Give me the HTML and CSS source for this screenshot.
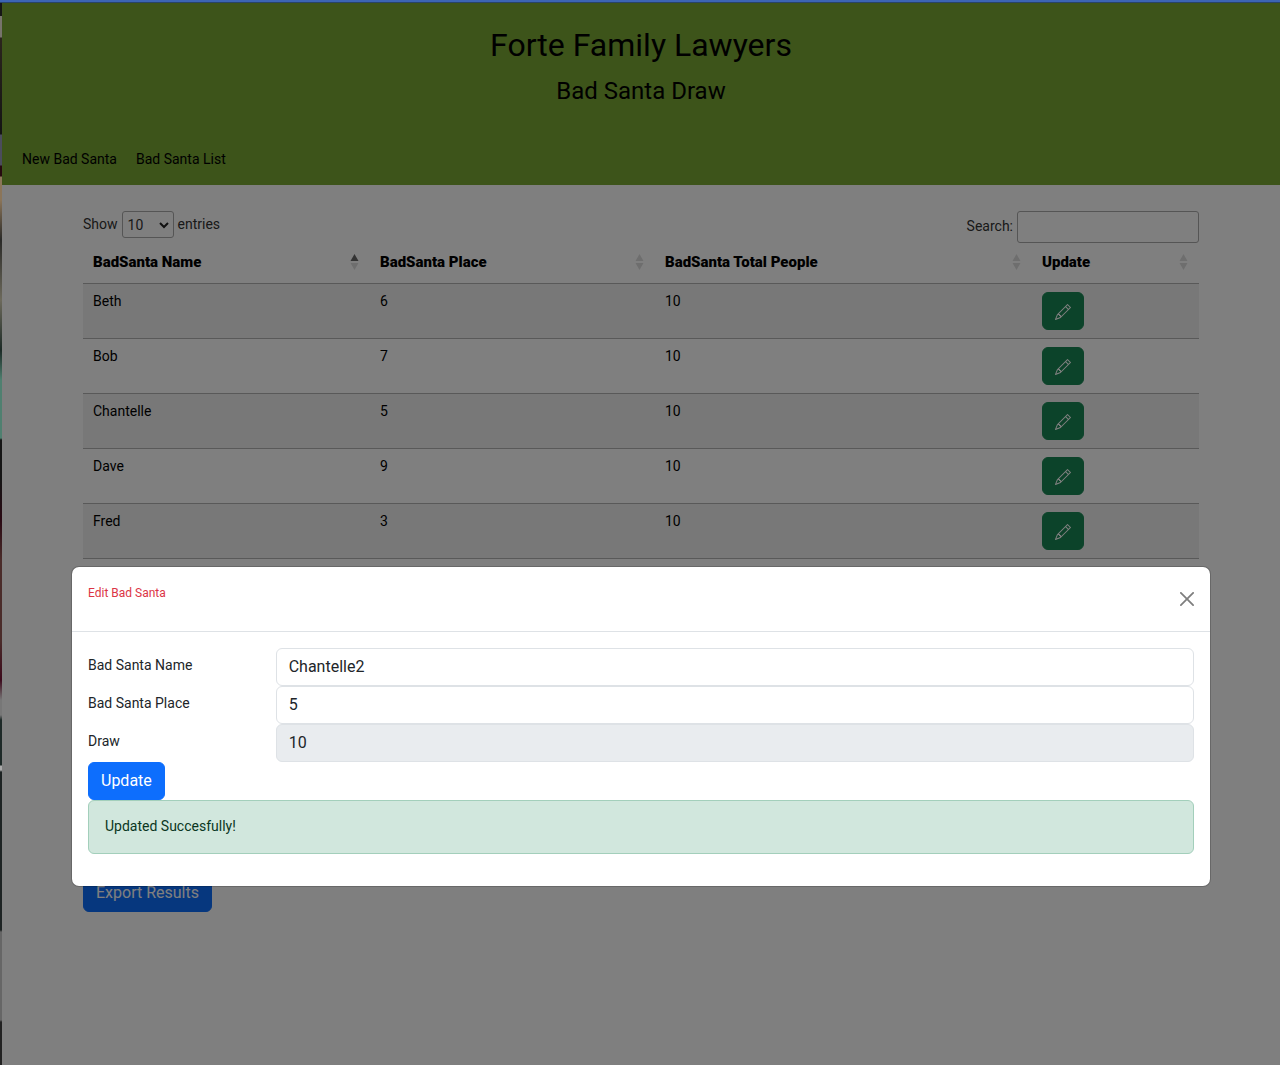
FILE: index.html
```html
<!DOCTYPE html>
<html lang="en">
<head>
<meta charset="utf-8">
<meta name="viewport" content="width=device-width, initial-scale=1">
<title>Bad Santa Draw</title>
<link rel="stylesheet" href="styles.css">
</head>
<body>
<svg class="sprite" aria-hidden="true">
  <symbol id="pencil" viewBox="0 0 16 16"><path d="M12.146.146a.5.5 0 0 1 .708 0l3 3a.5.5 0 0 1 0 .708l-10 10a.5.5 0 0 1-.168.11l-5 2a.5.5 0 0 1-.65-.65l2-5a.5.5 0 0 1 .11-.168zM11.207 2.5 13.5 4.793 14.793 3.5 12.5 1.207zm1.586 3L10.5 3.207 4 9.707V10h.5a.5.5 0 0 1 .5.5v.5h.5a.5.5 0 0 1 .5.5v.5h.293zm-9.761 5.175-.106.106-1.528 3.821 3.821-1.528.106-.106A.5.5 0 0 1 5 12.500V12h-.5a.5.5 0 0 1-.5-.5V11h-.5a.5.5 0 0 1-.468-.325z"/></symbol>
  <symbol id="sort" viewBox="0 0 9 18"><path class="up" d="M4.500 1 8.500 8H.5z"/><path d="M.5 10h8l-4 7z"/></symbol>
</svg>
<div class="page">
  <header class="banner">
    <h1>Forte Family Lawyers</h1>
    <h2>Bad Santa Draw</h2>
    <nav class="nav"><a href="#new">New Bad Santa</a><a href="#list">Bad Santa List</a></nav>
  </header>
  <main class="container">
    <div class="controls">
      <label class="length">Show <span class="select-wrap"><select><option>10</option></select><svg class="chevron" viewBox="0 0 10 10"><path d="m1 3 4 4 4-4"/></svg></span> entries</label>
      <label class="search">Search: <input type="search"></label>
    </div>
    <table class="draw">
      <colgroup><col class="c-name"><col class="c-place"><col class="c-total"><col class="c-update"></colgroup>
      <thead><tr>
        <th><div class="head">BadSanta Name<svg class="sort asc"><use href="#sort"/></svg></div></th>
        <th><div class="head">BadSanta Place<svg class="sort"><use href="#sort"/></svg></div></th>
        <th><div class="head">BadSanta Total People<svg class="sort"><use href="#sort"/></svg></div></th>
        <th><div class="head">Update<svg class="sort"><use href="#sort"/></svg></div></th>
      </tr></thead>
      <tbody>
        <tr><td>Beth</td><td>6</td><td>10</td><td class="action"><button class="btn edit" aria-label="Edit Beth"><svg><use href="#pencil"/></svg></button></td></tr>
        <tr><td>Bob</td><td>7</td><td>10</td><td class="action"><button class="btn edit" aria-label="Edit Bob"><svg><use href="#pencil"/></svg></button></td></tr>
        <tr><td>Chantelle</td><td>5</td><td>10</td><td class="action"><button class="btn edit" aria-label="Edit Chantelle"><svg><use href="#pencil"/></svg></button></td></tr>
        <tr><td>Dave</td><td>9</td><td>10</td><td class="action"><button class="btn edit" aria-label="Edit Dave"><svg><use href="#pencil"/></svg></button></td></tr>
        <tr><td>Fred</td><td>3</td><td>10</td><td class="action"><button class="btn edit" aria-label="Edit Fred"><svg><use href="#pencil"/></svg></button></td></tr>
      </tbody>
    </table>
    <button class="btn primary">Export Results</button>
  </main>
  <div class="backdrop">
    <section class="modal" role="dialog" aria-labelledby="modal-title">
      <div class="modal-header">
        <h3 id="modal-title">Edit Bad Santa</h3>
        <button class="close" aria-label="Close"><svg viewBox="0 0 16 16"><path d="M.293.293a1 1 0 0 1 1.414 0L8 6.586 14.293.293a1 1 0 1 1 1.414 1.414L9.414 8l6.293 6.293a1 1 0 0 1-1.414 1.414L8 9.414l-6.293 6.293a1 1 0 0 1-1.414-1.414L6.586 8 .293 1.707a1 1 0 0 1 0-1.414z"/></svg></button>
      </div>
      <form class="modal-body">
        <div class="field"><label for="name">Bad Santa Name</label><input id="name" value="Chantelle2"></div>
        <div class="field"><label for="place">Bad Santa Place</label><input id="place" value="5"></div>
        <div class="field"><label for="draw">Draw</label><input id="draw" value="10" disabled></div>
        <button class="btn primary" type="button">Update</button>
        <div class="alert" role="alert">Updated Succesfully!</div>
      </form>
    </section>
  </div>
</div>
</body>
</html>
```
FILE: styles.css
```css
* { box-sizing: border-box; }
body {
  margin: 0;
  padding: 3px 0 0 2px;
  font: 14px/20px Roboto, "Liberation Sans", sans-serif;
  color: #212529;
  background:
    linear-gradient(#3c65b5 0 2px, #294468 2px 3px, transparent 3px),
    linear-gradient(#161616 0 16px, #77736c 16px 37px, #2b251d 38px, #141414 134px, #4b4c5c 135px 165px, #260a10 166px 176px, #8b7559 177px 200px, #2a2a28 240px, #6d6a5c 300px, #1c2a26 350px, #4f8070 380px 438px, #151515 440px 480px, #2a0a14 520px, #4a2c2a 560px 640px, #3c0a1c 680px, #777 700px 715px, #1e2a28 720px 765px, #aaa 766px 770px, #1d2323 772px 930px, #666 932px 1020px, #222 1022px);
}
.sprite { position: absolute; width: 0; height: 0; }
.page { position: relative; min-height: calc(100vh - 3px); background: #fff; }
button, input, select { font-family: inherit; color: inherit; }

.banner { padding: 22px 12px 8px; background: #7aa834; color: #000; text-align: center; }
h1, h2, h3 { margin: 0; font-weight: 400; }
h1 { font-size: 32px; line-height: 40px; }
h2 { margin-top: 8px; font-size: 24px; line-height: 36px; }
.nav { display: flex; gap: 3px; margin-top: 32px; text-align: left; }
.nav a { padding: 8px; color: #000; text-decoration: none; }

.container { max-width: 1140px; margin: 0 auto; padding: 26px 12px 0; }
.controls { display: flex; justify-content: space-between; align-items: flex-start; height: 32px; color: #333; }
.length, .search { display: flex; align-items: flex-start; gap: 4px; }
.length { line-height: 26px; }
.search { line-height: 30px; }
.select-wrap { position: relative; display: flex; }
select {
  width: 52px; height: 27px; padding: 0 5px;
  border: 1px solid #aaa; border-radius: 3px;
  background: transparent; font-size: 14px; appearance: none;
}
.chevron { position: absolute; right: 5px; top: 9px; width: 10px; height: 10px; fill: none; stroke: #222; stroke-width: 2; pointer-events: none; }
.search input { width: 182px; height: 32px; border: 1px solid #aaa; border-radius: 3px; background: transparent; }

.draw { width: 100%; margin-bottom: 315px; border-collapse: collapse; table-layout: fixed; color: #000; }
.c-name { width: 287px; }
.c-place { width: 285px; }
.c-total { width: 377px; }
.c-update { width: 167px; }
th { padding: 9px 11px 11px 10px; font-size: 15px; font-weight: 900; text-align: left; }
.head { display: flex; justify-content: space-between; align-items: center; }
.sort { width: 9px; height: 18px; color: #ddd; fill: #ddd; }
.sort.asc { color: #666; }
.up { fill: currentColor; }
tbody tr { height: 55px; border-top: 1px solid #b3b3b3; }
tbody tr:last-child { border-bottom: 1px solid #b3b3b3; }
tbody tr:nth-child(odd) { background: #f1f1f1; }
td { padding: 7px 10px; vertical-align: top; }
.action { padding: 8px 10px; }

.btn {
  display: block; height: 38px; padding: 6px 12px;
  border: 1px solid transparent; border-radius: 6px;
  font-size: 16px; line-height: 24px; color: #fff;
}
.primary { background: #0d6efd; border-color: #0d6efd; }
.edit { background: #198754; border-color: #198754; }
.edit svg { display: block; width: 16px; height: 16px; margin: 5px 0 3px; fill: #fff; }

.backdrop { position: absolute; inset: 0; background: rgba(0, 0, 0, .5); }
.modal {
  max-width: 1140px; margin: 563px auto 0;
  border: 1px solid rgba(0, 0, 0, .175); border-radius: 8px;
  background: #fff; background-clip: padding-box;
}
.modal-header { display: flex; justify-content: space-between; padding: 16px 16px 15px; border-bottom: 1px solid #dee2e6; }
.modal-header h3 { font-size: 12px; line-height: 20px; color: #dc3545; }
.close { padding: 9px 0 10px; border: 0; background: none; opacity: .5; }
.close svg { display: block; width: 14px; height: 14px; }
.modal-body { padding: 16px; }
.field { display: grid; grid-template-columns: 1fr 5fr; gap: 4px; }
.field label { padding-top: 7px; }
.field input {
  width: 100%; height: 38px; padding: 5px 12px 7px;
  border: 1px solid #dee2e6; border-radius: 6px;
  background: #fff; font-size: 16px; line-height: 24px;
}
.field input:disabled { background: #e9ecef; color: #212529; }
.alert {
  margin-bottom: 16px; padding: 15px 16px 17px;
  border: 1px solid #a3cfbb; border-radius: 6px;
  background: #d1e7dd; color: #0a3622;
}
```
